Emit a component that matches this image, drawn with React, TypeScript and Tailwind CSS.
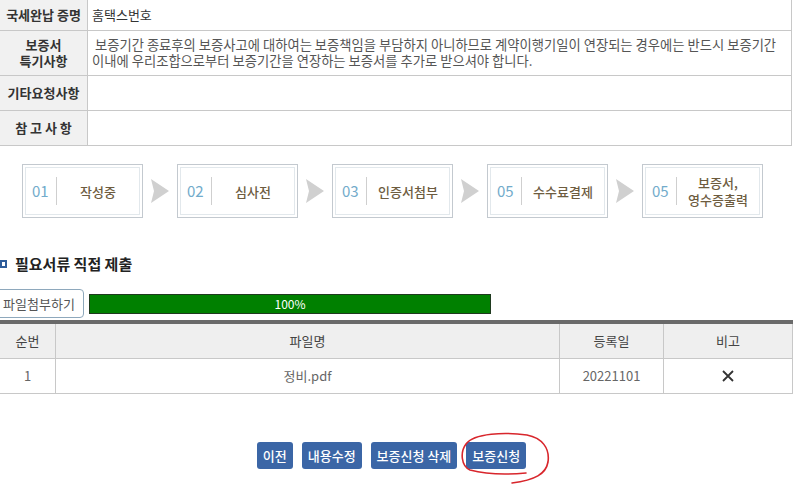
import React from 'react'

const steps = [
  { no: '01', label: ['작성중'] },
  { no: '02', label: ['심사전'] },
  { no: '03', label: ['인증서첨부'] },
  { no: '05', label: ['수수료결제'] },
  { no: '05', label: ['보증서,', '영수증출력'] },
]

const font = { fontFamily: '"Noto Sans CJK KR", "Noto Sans", sans-serif' }

export default function App() {
  return (
    <div className="relative w-[793px] h-[486px] overflow-hidden bg-white text-[#333]" style={font}>
      {/* 상단 정보 테이블 */}
      <div className="w-[792px] border-r border-[#c8c8c8] text-[13px]">
        <div className="flex h-[31px] border-b border-[#c8c8c8]">
          <div className="w-[88px] shrink-0 bg-[#f1f1f1] border-r border-[#c8c8c8] flex items-center justify-center font-semibold text-[#333]">
            국세완납 증명
          </div>
          <div className="flex items-center pl-[4px] text-[#333]">홈택스번호</div>
        </div>
        <div className="flex h-[45px] border-b border-[#c8c8c8]">
          <div className="w-[88px] shrink-0 bg-[#f1f1f1] border-r border-[#c8c8c8] flex flex-col items-center justify-center font-semibold leading-[16px]">
            <span>보증서</span>
            <span>특기사항</span>
          </div>
          <div className="flex flex-col justify-center pl-[4px] leading-[16px] text-[13.3px] text-[#555] whitespace-nowrap">
            <span>&nbsp;보증기간 종료후의 보증사고에 대하여는 보증책임을 부담하지 아니하므로 계약이행기일이 연장되는 경우에는 반드시 보증기간</span>
            <span>이내에 우리조합으로부터 보증기간을 연장하는 보증서를 추가로 받으셔야 합니다.</span>
          </div>
        </div>
        <div className="flex h-[35px] border-b border-[#c8c8c8]">
          <div className="w-[88px] shrink-0 bg-[#f1f1f1] border-r border-[#c8c8c8] flex items-center justify-center font-semibold">
            기타요청사항
          </div>
          <div />
        </div>
        <div className="flex h-[35px] border-b border-[#c8c8c8]">
          <div className="w-[88px] shrink-0 bg-[#f1f1f1] border-r border-[#c8c8c8] flex items-center justify-center font-semibold">
            참 고 사 항
          </div>
          <div />
        </div>
      </div>

      {/* 진행 단계 */}
      <div className="flex items-center pl-[22px] mt-[18px]">
        {steps.map((s, idx) => (
          <React.Fragment key={idx}>
            {idx > 0 && (
              <div className="w-[34px] flex justify-center">
                <svg width="18" height="24" viewBox="0 0 18 24">
                  <polygon points="0,0 18,12 0,24 3,12" fill="#d0d0d0" />
                </svg>
              </div>
            )}
            <div className="w-[121px] h-[54px] border border-[#c3c9cf] p-[2px]">
              <div className="h-full border border-[#e2e8ec] flex items-center">
                <span className="w-[30px] pl-[6px] text-[15px] text-[#72abcb]">{s.no}</span>
                <span className="w-px h-[28px] bg-[#cfcfcf]" />
                <div className="flex-1 flex flex-col items-center text-[13px] leading-[17px] text-[#6d5c3f] font-medium">
                  {s.label.map((l) => (
                    <span key={l}>{l}</span>
                  ))}
                </div>
              </div>
            </div>
          </React.Fragment>
        ))}
      </div>

      {/* 필요서류 직접 제출 */}
      <div className="flex items-center gap-[8px] mt-[38px] h-[16px]">
        <span className="w-[7px] h-[8px] border-2 border-[#2e5c9a] bg-white" />
        <span className="text-[15px] font-bold text-[#222]">필요서류 직접 제출</span>
      </div>

      <div className="flex items-center mt-[17px] h-[29px]">
        <button className="ml-[-6px] h-[29px] w-[90px] border border-[#8ea8bc] rounded-[4px] bg-white text-[13px] text-[#555]">
          파일첨부하기
        </button>
        <div className="ml-[5px] w-[402px] h-[20px] bg-[#008000] border border-[#1f3a1f] flex items-center justify-center text-white text-[12px]">
          100%
        </div>
      </div>

      {/* 파일 목록 */}
      <div className="mt-[2px] border-t-[4px] border-[#6a6a6a] text-[13px]">
        <div className="flex h-[35px] bg-[#efefef] border-b border-[#c8c8c8] text-[#444]">
          <div className="w-[56px] flex items-center justify-center border-r border-[#c8c8c8]">순번</div>
          <div className="w-[504px] flex items-center justify-center border-r border-[#c8c8c8]">파일명</div>
          <div className="w-[104px] flex items-center justify-center border-r border-[#c8c8c8]">등록일</div>
          <div className="flex-1 flex items-center justify-center border-r border-[#c8c8c8]">비고</div>
        </div>
        <div className="flex h-[35px] border-b border-[#c8c8c8] text-[#666]">
          <div className="w-[56px] flex items-center justify-center border-r border-[#c8c8c8]">1</div>
          <div className="w-[504px] flex items-center justify-center border-r border-[#c8c8c8]">정비.pdf</div>
          <div className="w-[104px] flex items-center justify-center border-r border-[#c8c8c8]">20221101</div>
          <div className="flex-1 flex items-center justify-center border-r border-[#c8c8c8]">
            <svg width="12" height="12" viewBox="0 0 12 12">
              <path d="M1 1 L11 11 M11 1 L1 11" stroke="#333" strokeWidth="1.8" />
            </svg>
          </div>
        </div>
      </div>

      {/* 하단 버튼 */}
      <div className="flex justify-center gap-[9px] mt-[48px] pr-[10px]">
        <button className="h-[27px] px-[6px] rounded-[3px] bg-[#3b66a6] text-white text-[13px] font-medium">이전</button>
        <button className="h-[27px] px-[6px] rounded-[3px] bg-[#3b66a6] text-white text-[13px] font-medium">내용수정</button>
        <button className="h-[27px] px-[6px] rounded-[3px] bg-[#3b66a6] text-white text-[13px] font-medium">보증신청 삭제</button>
        <button className="h-[27px] px-[6px] rounded-[3px] bg-[#3b66a6] text-white text-[13px] font-medium">보증신청</button>
      </div>

      {/* 빨간 표시 */}
      <svg className="absolute left-0 top-0 pointer-events-none" width="793" height="486" viewBox="0 0 793 486">
        <path
          d="M526 473 C505 475 485 474 470 470 C461 466 460 452 466 444 C474 433 505 432 527 435 C542 438 550 448 548 462 C546 474 535 480 512 483"
          fill="none"
          stroke="#d8262c"
          strokeWidth="1.6"
          strokeLinecap="round"
        />
      </svg>
    </div>
  )
}
